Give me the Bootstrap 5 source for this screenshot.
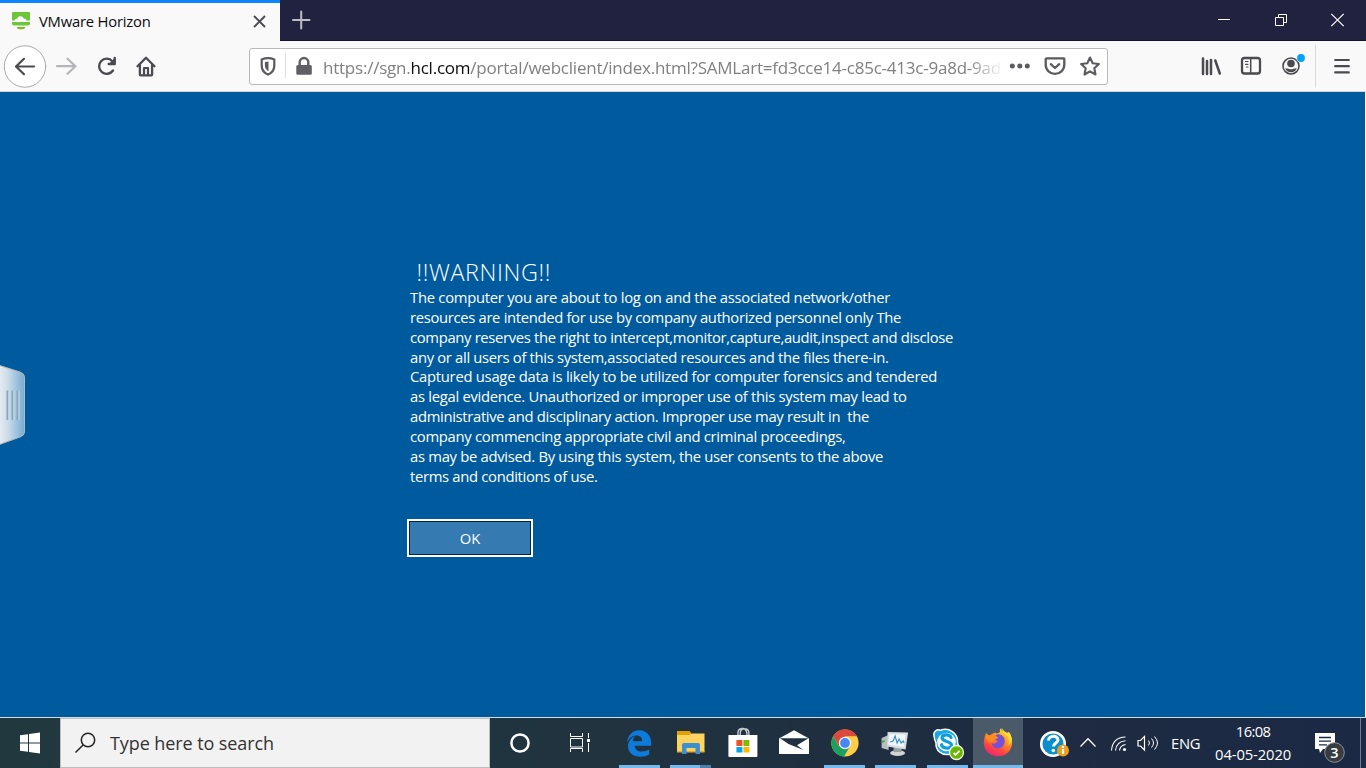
<!DOCTYPE html>
<html lang="en">
<head>
<meta charset="utf-8">
<meta name="viewport" content="width=device-width, initial-scale=1">
<title>VMware Horizon</title>
<link href="https://cdn.jsdelivr.net/npm/bootstrap@5.3.0/dist/css/bootstrap.min.css" rel="stylesheet">
<style>
body{width:1366px;height:768px;font-family:"Open Sans","Noto Sans",sans-serif;font-size:14.8px;line-height:20px;white-space:nowrap}
svg{display:block;flex:none}
.tabstrip{height:41px;background:#20223f;border-bottom:1px solid #14152b}
.tab-active{width:280px;height:41px;background:#f9f9fa;border-top:3px solid #0a84ff;color:#0c0c0d}
.tools{height:51px;background:#f9f9fa;border-bottom:1px solid #d5d5d8}
.urlbox{width:859px;height:37px;margin:7px 0 0 85px;background:#fff;border:1px solid #b9b9bb;border-radius:3px}
.url{width:678px;padding-top:7px;font-size:17px;line-height:24px;color:#808080;-webkit-mask-image:linear-gradient(90deg,#000 645px,transparent 680px);mask-image:linear-gradient(90deg,#000 645px,transparent 680px)}
.url b{font-weight:400;color:#0c0c0d}
.desktop{width:1365px;height:625px;background:#005a9e;color:#fff}
.message{padding:165px 0 0 407px}
.warning{font-size:23.4px;line-height:30px;margin:0 0 0 9.5px;font-weight:300}
.lines{margin:1px 0 0 3px;line-height:19.86px}
.btn-ok{width:126px;height:38px;margin-top:32.4px;border:2px solid #fff;border-radius:0;background:#357ab0;box-shadow:inset 0 0 0 1px #06233c;color:#fff;font-size:14.8px;line-height:20px;padding:0}
.taskbar{height:51px;border-top:1px solid #d3dce2;background:linear-gradient(90deg,#21383f,#20333f 45%,#1e2b41 75%,#1b2945);color:#fff}
.search{width:430px;height:50px;background:#f2f2f2;border:1px solid #bdbdbd;color:#333;font-size:18px}
.app{width:51.3px;height:50px}
.open-app::after{content:"";position:absolute;bottom:0;left:5px;width:41px;height:3px;background:#76b9ed}
.open-app.multi::after{background:linear-gradient(90deg,#76b9ed 30px,#4f7fa8 30px)}
.current-app{width:50px;background:#4b5a69}
.current-app::after{left:0;width:50px}
.clock{width:90px;line-height:23px;font-size:14.8px;padding-top:2px}
</style>
</head>
<body class="overflow-hidden d-flex flex-column bg-white">
<header class="tabstrip d-flex">
  <div class="tab-active d-flex">
    <svg width="39" height="38" viewBox="0 3 39 38"><path d="M13.500 12h15.500q1 0 1 1v7.500h-3.500q-.5-2-2.800-2-1-2.500-3.500-2.300-2.400.1-3 2.200-2.400.2-2.700 2.100h-2.500V13q0-1 1.500-1z" fill="#6dc53c"/><path d="M12 22h18v1.500q0 2-2 2H14q-2 0-2-2z" fill="#6dc53c"/><path d="M17 27h8v1.200l-2 1h-4l-2-1z" fill="#78be20"/></svg>
    <div class="pt-2"><span data-w="111.5">VMware Horizon</span></div>
    <svg class="ms-auto" width="42" height="38" viewBox="238 3 42 38"><path d="M254 16l11 11m0-11l-11 11" stroke="#4a4a4f" stroke-width="1.900" fill="none"/></svg>
  </div>
  <svg width="45" height="40" viewBox="280 0 45 40"><path d="M293 20h16.500M301.200 11.500v17" stroke="#bcbcc6" stroke-width="2" stroke-linecap="round"/></svg>
  <svg class="ms-auto" width="160" height="40" viewBox="1206 0 160 40" fill="none" stroke="#fff"><path d="M1218 19.500h12M1275.500 17.500h8v8h-8zM1278.500 17v-2.500h8v8h-3"/><path d="M1331.300 13.800l12.400 12.400m0-12.400l-12.400 12.400" stroke-width="1.200"/></svg>
</header>
<nav class="tools d-flex" aria-label="Browser toolbar">
  <svg width="164" height="50" viewBox="0 41 164 50" fill="none" stroke="#4a4a4f" stroke-width="2.200" stroke-linecap="round" stroke-linejoin="round">
    <circle cx="25" cy="66.500" r="20.700" fill="#fff" stroke="#aaaaac" stroke-width="1"/>
    <path d="M34 66.500H16.500m7.500-7.700-8 7.700 8 7.700"/>
    <path d="M57 66.200h17.500m-7-7.500 8 7.500-8 7.500" stroke="#b5b5b7"/>
    <path d="M113 70.500a7.600 7.600 0 1 1-.6-9.300M114.700 58v6h-6" stroke-width="2.400"/><path d="M115.300 57.500v7.200h-7.200z" fill="#4a4a4f" stroke="none"/>
    <path d="M137.500 66.200l8.500-8.500 8.500 8.500M139.900 65v9.500q0 .8.800.8h10.600q.8 0 .8-.8V65" stroke-width="2.300"/><path d="M144 75v-7h4v7" stroke-width="2.200" stroke-linecap="butt"/>
  </svg>
  <div class="urlbox d-flex">
    <svg width="73" height="35" viewBox="250 49 73 35"><path d="M268 58.200q3.200 0 6.300 1.300v6q0 6.500-6.300 9-6.300-2.500-6.300-9v-6q3.100-1.300 6.300-1.300z" fill="none" stroke="#5b5b5f" stroke-width="2.200"/><path d="M268.500 61.500v9.800q-3.600-2-3.600-6v-3.300z" fill="#5b5b5f"/><path d="M285.500 53.500v25" stroke="#dedee0"/><rect x="296.300" y="65" width="15.500" height="9.800" rx="1.500" fill="#606064"/><path d="M299.700 66v-3.700a4.300 4.300 0 0 1 8.600 0V66" fill="none" stroke="#606064" stroke-width="2.400"/></svg>
    <div class="url overflow-hidden"><span data-w="678">https://sgn.<b>hcl.com</b>/portal/webclient/index.html?SAMLart=fd3cce14-c85c-413c-9a8d-9ad</span></div>
    <svg width="106" height="35" viewBox="1001 49 106 35" fill="none" stroke="#5b5b5f" stroke-width="2.300" stroke-linejoin="round" stroke-linecap="round"><g fill="#5b5b5f" stroke="none"><circle cx="1012.300" cy="66" r="2.500"/><circle cx="1019.800" cy="66" r="2.500"/><circle cx="1027.300" cy="66" r="2.500"/></g><path d="M1046.200 58.300h17.600q.5 0 .5.500v6q0 4-2.800 6.500t-6.500 2.500-6.500-2.500-2.800-6.500v-6q0-.5.500-.5z"/><path d="M1050.800 64.200l4.200 3.800 4.200-3.800"/><path d="M1090 57.500l2.700 5.700 6.200.8-4.600 4.200 1.200 6.300-5.500-3.100-5.500 3.100 1.200-6.300-4.600-4.200 6.200-.8z" stroke-width="2.100"/></svg>
  </div>
  <svg class="ms-auto" width="186" height="50" viewBox="1180 41 186 50" fill="none" stroke="#4a4a4f" stroke-width="2" stroke-linecap="round">
    <path d="M1203 58.500v15.500M1207 61v13M1211 60v14M1215.300 60.500l4.500 13" stroke-width="2.500"/>
    <rect x="1242" y="58" width="18" height="15.500" rx="2.500" stroke-width="2.300"/><path d="M1250.700 58v15.500" stroke-width="1.500"/><path d="M1245.500 61.500h2.500M1245.500 64.300h2.500M1246.500 67h1.500" stroke-width="1.200"/>
    <circle cx="1291" cy="66" r="8" stroke-width="1.600"/><circle cx="1291" cy="63.500" r="3.800" fill="#4a4a4f" stroke="none"/><path d="M1285.200 68.200q2 0 3.300.6 2.500 1 5 0 1.300-.6 3.300-.6-1.500 4-5.800 4t-5.800-4z" fill="#4a4a4f" stroke="none"/><circle cx="1301" cy="58" r="4.700" fill="#f9f9fa" stroke="none"/><circle cx="1301" cy="58" r="3.900" fill="#00a2ff" stroke="none"/>
    <path d="M1315.500 45v42" stroke="#d9d9db" stroke-width="1"/><path d="M1335.200 60h13.600M1335.200 66.200h13.600M1335.200 72.400h13.600" stroke-width="2.200"/>
  </svg>
</nav>
<main class="desktop position-relative">
  <svg class="position-absolute start-0" style="top:272px" width="27" height="84" viewBox="0 364 27 84"><defs><linearGradient id="handle"><stop stop-color="#e8edf1"/><stop offset=".35" stop-color="#ccdce8"/><stop offset="1" stop-color="#75abd4"/></linearGradient></defs><path d="M-1 365.300L20 372q4.500 1.600 4.500 5v55q0 3.500-4.500 5L-1 444.700z" fill="url(#handle)" stroke="#b8b8b4"/><path d="M7.500 390.500v29.500m5-29.500v29.500m5-29.500v29.500" stroke="#8aa6ba" stroke-width="2"/><path d="M9 390.500v29.500m5-29.500v29.500m5-29.500v29.500" stroke="#c8dcec"/></svg>
  <div class="message">
    <h1 class="warning"><span data-w="134.500">!!WARNING!!</span></h1>
    <div class="lines">
      <div><span data-w="480">The computer you are about to log on and the associated network/other</span></div>
      <div><span data-w="491">resources are intended for use by company authorized personnel only The</span></div>
      <div><span data-w="543">company reserves the right to intercept,monitor,capture,audit,inspect and disclose</span></div>
      <div><span data-w="478.5">any or all users of this system,associated resources and the files there-in.</span></div>
      <div><span data-w="527">Captured usage data is likely to be utilized for computer forensics and tendered</span></div>
      <div><span data-w="496.5">as legal evidence. Unauthorized or improper use of this system may lead to</span></div>
      <div><span data-w="459">administrative and disciplinary action. Improper use may result in&nbsp; the</span></div>
      <div><span data-w="435.5">company commencing appropriate civil and criminal proceedings,</span></div>
      <div><span data-w="473">as may be advised. By using this system, the user consents to the above</span></div>
      <div><span data-w="187.5">terms and conditions of use.</span></div>
    </div>
    <button class="btn btn-ok"><span data-w="20.5">OK</span></button>
  </div>
</main>
<footer class="taskbar d-flex">
  <svg width="60" height="50" viewBox="0 718 60 50"><path d="M20 735.300l8-1.100v8.300h-8zM29 734l11-1.500v10H29zM20 743.500h8v8.300l-8-1.100zM29 743.500h11v10L29 752z" fill="#fff"/></svg>
  <div class="search d-flex align-items-center">
    <svg width="49" height="48" viewBox="61 719 49 48" fill="none" stroke="#222" stroke-width="1.500"><circle cx="88" cy="740" r="6.700"/><path d="M83.300 744.800L75.500 752.500"/></svg>
    <span data-w="164">Type here to search</span>
  </div>
  <svg width="124" height="50" viewBox="490 718 124 50" fill="none" stroke="#fff"><circle cx="520" cy="743" r="8.600" stroke-width="2.500"/><path d="M570.500 733v3.500h12V733M570.500 738.500h12v8.500h-12zM570.500 752v-3.500h12v3.500M588.500 733v5M588.500 743v9"/><path d="M587 739h3v3h-3z" fill="#fff" stroke="none"/></svg>
  <div class="app open-app position-relative"><svg width="51" height="50" viewBox="614 718 51 50"><path d="M627 742.300c.8-6.800 5.400-12 12-12 7.800 0 12.200 5.500 12.200 13v2.500h-16.500c.2 4 3.300 5.800 7 5.800 2.700 0 5.300-.8 7.500-2v5c-2.800 1.500-5.600 2.200-9 2.200-7.500 0-12.200-4.400-12.200-10.700 0-4.600 2.700-8.200 7-10.200-1.300 1.500-2 3.200-2.200 5.300h9.300c0-3.400-1.800-5.600-5.600-5.600-4 0-7.300 2.500-9.500 6.700z" fill="#0c7bdc"/></svg></div>
  <div class="app open-app multi position-relative"><svg width="51" height="50" viewBox="665 718 51 50"><path d="M677 731h12l2 2.500h13.500v18.500H677z" fill="#ffd35f"/><path d="M677 731h12.500l1.500 2-1.500 2H677z" fill="#e0a006"/><path d="M677 751h27.500v1.500H677z" fill="#e7ac29"/><path d="M682 754v-9q0-2 2-2h14q2 0 2 2v9h-4.500v-6h-9v6z" fill="#3d8fd0"/></svg></div>
  <div class="app"><svg width="51" height="50" viewBox="716.600 718 51 50"><path d="M737.500 736v-3q0-4 4-4.500t5 4.500v3M739.800 735.500v-2.500q.2-4 4-4.300 4.700 0 4.700 4.300v2.500" fill="none" stroke="#c4cbd0" stroke-width="1.400"/><path d="M728 735h29v21q0 1-1 1h-27q-1 0-1-1z" fill="#fff"/><path d="M736 740h6v6h-6z" fill="#f25022"/><path d="M743 740h6v6h-6z" fill="#7fba00"/><path d="M736 747h6v5.500h-6z" fill="#00a4ef"/><path d="M743 747h6v5.500h-6z" fill="#ffb900"/></svg></div>
  <div class="app"><svg width="51" height="50" viewBox="768 718 51 50"><path d="M779 738.500l15-8.200 15 8.200V754h-30z" fill="#fff"/><path d="M780 738.300h28.500l-11.500 7 6.500 4.700-15-6z" fill="#20303f"/></svg></div>
  <div class="app open-app position-relative"><svg width="51" height="50" viewBox="819 718 51 50"><circle cx="845" cy="743" r="13.600" fill="#ffcd46"/><path d="M845 743L833.200 736.200A13.600 13.600 0 0 1 856.800 736.200H845z" fill="#dc4a3d"/><path d="M833.200 736.200A13.600 13.600 0 0 0 844 756.600l6-10.300-5-3.300-6 3.400z" fill="#1ba15e"/><path d="M833.200 736.200L839.100 746.400 841 738z" fill="#dc4a3d"/><circle cx="845" cy="743" r="6.200" fill="#f4f4f4"/><circle cx="845" cy="743" r="4.900" fill="#4688f1"/></svg></div>
  <div class="app open-app position-relative"><svg width="51" height="50" viewBox="870.400 718 51 50"><path d="M882 738l7-3v15l-7-2z" fill="#b8bdc0"/><path d="M882 741l3-1v2l-3 1z" fill="#47a43b"/><ellipse cx="898" cy="753" rx="7.500" ry="3" fill="#d0d4d5"/><path d="M894 747h8v5h-8z" fill="#989fa4"/><path d="M888 732l20.500.5-2.500 17-18.500-3z" fill="#d8dde0"/><path d="M890 734l16 .5-1.800 12.500-15.500-2.500z" fill="#eef7fd"/><path d="M890.500 742l3-1 2-5 2 7 2-4 2 4 2-2 1 2" fill="none" stroke="#388dc2" stroke-width="1.100"/></svg></div>
  <div class="app open-app position-relative"><svg width="51" height="50" viewBox="922 718 51 50"><path d="M934 736c-1-4 2.500-7.200 6.500-5.800C949 727 958 733 957.500 742c-.2 2 2 4 1.500 7-1 6-6 7-9.500 5.200-8 1.800-14-4-13.500-11.200q-1.500-3-2-7z" fill="#18a8e8" stroke="#fff" stroke-width="1.500"/><circle cx="946.500" cy="742" r="9.300" fill="#fff"/><path d="M951 737.500c-1.500-3.800-9-3.500-9 .3 0 4.400 9.500 2.900 9.500 7.200 0 4-9 4.200-10-.3" fill="none" stroke="#0b9ddd" stroke-width="3.200" stroke-linecap="round"/><circle cx="956.500" cy="752.500" r="7" fill="#6bb700" stroke="#f2f6ee" stroke-width="1.300"/><path d="M953.500 752.800l2 2 4-4" fill="none" stroke="#fff" stroke-width="1.800"/></svg></div>
  <div class="app current-app open-app position-relative"><svg width="50" height="50" viewBox="973 718 50 50"><defs><linearGradient id="flame" x1=".8" y1="0" x2=".3" y2="1"><stop stop-color="#ffe139"/><stop offset=".4" stop-color="#ff9a1f"/><stop offset=".75" stop-color="#ff4242"/><stop offset="1" stop-color="#e72779"/></linearGradient></defs><path d="M986 733q1.500 2 3.500 2.500 4-1 5.500-3 2 2 5-.5-1-2 1-4 .5 3 4.500 5 2 1 2.500 3v-4c4 4 4.500 8 4 12-1 8-7 12.300-14 12.300-8 0-14-5.500-14.200-13 0-4 1-7.500 2.200-10.300z" fill="url(#flame)"/><path d="M994 736q6-4 10 1.500c2.500 5-1 11-6 11-4.500 0-6-3-6-5 3 1 4-1 6-2.500l-5-1.500z" fill="#7551d8"/><path d="M986 733q1.500 2 3.500 2.500l5-3q0 3 4 5-4 2-4.500 4-4 0-5 2-3-3-3-10.500z" fill="#ff8c22"/><path d="M1002 728q0 5 5 8 3 3 1.500 9 4-3 3-8-1-4-3-5-1 1-2 .5-3-1-4.500-4.500z" fill="#ffd83a"/></svg></div>
  <svg width="148" height="50" viewBox="1023 718 148 50" fill="none" stroke="#fff"><circle cx="1053" cy="744" r="11.800" fill="#0c8dcc" stroke-width="2.500"/><path d="M1048.500 740.500c0-5.500 9.500-5.500 9.500-.5 0 3-4.500 3-4.500 6.500" stroke-width="3"/><circle cx="1053.300" cy="750.500" r="1.800" fill="#fff" stroke="none"/><circle cx="1063" cy="750.500" r="6" fill="#eda11b" stroke="none"/><path d="M1063 746v2m0 1v5" stroke-width="2.200"/><path d="M1080.500 746.500l7.500-7.800 7.500 7.800" stroke-width="1.300"/><circle cx="1124.500" cy="749.500" r="1.600" fill="#fff" stroke="none"/><path d="M1119.500 750.500q.5-5 6-6M1115.500 750.500q1-9 10-9.700M1111.500 750.500q1-13 14-13.500" stroke-width="1.100"/><path d="M1138 740.500h2.500l4-4v13.500l-4-4H1138z" stroke-width="1.200"/><path d="M1148.500 740.500q2 2.500 0 5M1151.500 738.500q4 4.500 0 9M1154.500 736.500q6 6.500 0 13"/></svg>
  <div class="align-self-center"><span data-w="29">ENG</span></div>
  <div class="clock text-center ms-2"><div><span data-w="34.500">16:08</span></div><div><span data-w="76">04-05-2020</span></div></div>
  <svg class="ms-auto" width="67" height="50" viewBox="1299 718 67 50"><path d="M1315 733h20v16h-12l-3 4-1-4h-4z" fill="#fff"/><path d="M1319 737.500h12m-12 3.700h12m-12 3.700h8" stroke="#1b2945" stroke-width="1.300"/><circle cx="1334.500" cy="752.500" r="9.800" fill="#383b40" stroke="#8c9298"/><text x="1334.500" y="757.500" text-anchor="middle" fill="#fff" font-size="14.500" font-weight="600">3</text><path d="M1360.500 718v50" stroke="#6f7a8b"/></svg>
</footer>
<script src="https://cdn.jsdelivr.net/npm/bootstrap@5.3.0/dist/js/bootstrap.bundle.min.js"></script>
<script>
// Track each label so that it fills its intended measure.
document.querySelectorAll('[data-w]').forEach(el => {
  const gap = (parseFloat(el.dataset.w) - el.getBoundingClientRect().width) / el.textContent.length;
  el.style.letterSpacing = gap + 'px';
});
</script>
</body>
</html>
